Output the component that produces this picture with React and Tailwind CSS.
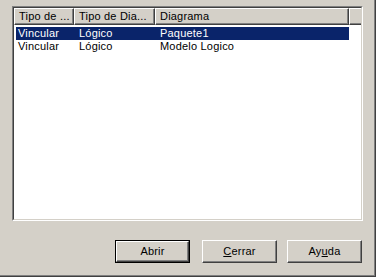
export default function App() {
  const cols = [
    { label: "Tipo de ...", w: "w-[60px]" },
    { label: "Tipo de Dia...", w: "w-[81px]" },
    { label: "Diagrama", w: "w-[194px]" },
  ];
  const rows = [
    ["Vincular", "Lógico", "Paquete1"],
    ["Vincular", "Lógico", "Modelo Logico"],
  ];

  return (
    <div className="w-[376px] h-[277px] bg-[#d4d0c8] border-r border-b border-[#404040] font-['Liberation_Sans',Arial,sans-serif] text-[11px] text-black">
      <div className="h-full border-r border-b border-[#808080] pt-[6px] pl-[12px]">
        {/* list view */}
        <div className="w-[351px] h-[215px] border border-t-[#808080] border-l-[#808080] border-b-white border-r-white">
          <div className="h-full border border-t-[#404040] border-l-[#404040] border-b-[#d4d0c8] border-r-[#d4d0c8] bg-white flex flex-col">
            <div className="flex h-[17px] shrink-0">
              {cols.map((c) => (
                <div
                  key={c.label}
                  className={`${c.w} h-full bg-[#d4d0c8] border-t border-l border-white border-r border-b border-r-[#404040] border-b-[#404040] shadow-[inset_-1px_-1px_0_#808080] pl-[4px] leading-[14px] whitespace-nowrap overflow-hidden tracking-[0.2px]`}
                >
                  {c.label}
                </div>
              ))}
              <div className="flex-1 h-full bg-[#d4d0c8] border-t border-l border-white border-b border-b-[#404040] shadow-[inset_0_-1px_0_#808080]" />
            </div>
            <div className="pt-[2px] tracking-[0.2px]">
              {rows.map((r, i) => (
                <div key={i} className="flex h-[13px] leading-[13px]">
                  <div
                    className={`flex w-[333px] ml-[2px] ${i === 0 ? "bg-[#0a246a] text-white" : ""}`}
                  >
                    <div className="w-[58px] pl-[2px]">{r[0]}</div>
                    <div className="w-[81px] pl-[5px]">{r[1]}</div>
                    <div className="flex-1 pl-[5px]">{r[2]}</div>
                  </div>
                </div>
              ))}
            </div>
          </div>
        </div>

        {/* buttons */}
        <div className="flex ml-[103px] mt-[19px] tracking-[0.2px]">
          <button className="w-[75px] h-[23px] border border-black bg-[#d4d0c8]">
            <div className="h-full border border-t-white border-l-white border-r-[#404040] border-b-[#404040] shadow-[inset_-1px_-1px_0_#808080] flex items-center justify-center">
              Abrir
            </div>
          </button>
          <button className="w-[75px] h-[23px] ml-[12px] border border-t-white border-l-white border-r-[#404040] border-b-[#404040] bg-[#d4d0c8]">
            <div className="h-full shadow-[inset_-1px_-1px_0_#808080] flex items-center justify-center">
              <span>
                <span className="underline">C</span>errar
              </span>
            </div>
          </button>
          <button className="w-[75px] h-[23px] ml-[10px] border border-t-white border-l-white border-r-[#404040] border-b-[#404040] bg-[#d4d0c8]">
            <div className="h-full shadow-[inset_-1px_-1px_0_#808080] flex items-center justify-center">
              <span>
                Ay<span className="underline">u</span>da
              </span>
            </div>
          </button>
        </div>
      </div>
    </div>
  );
}
